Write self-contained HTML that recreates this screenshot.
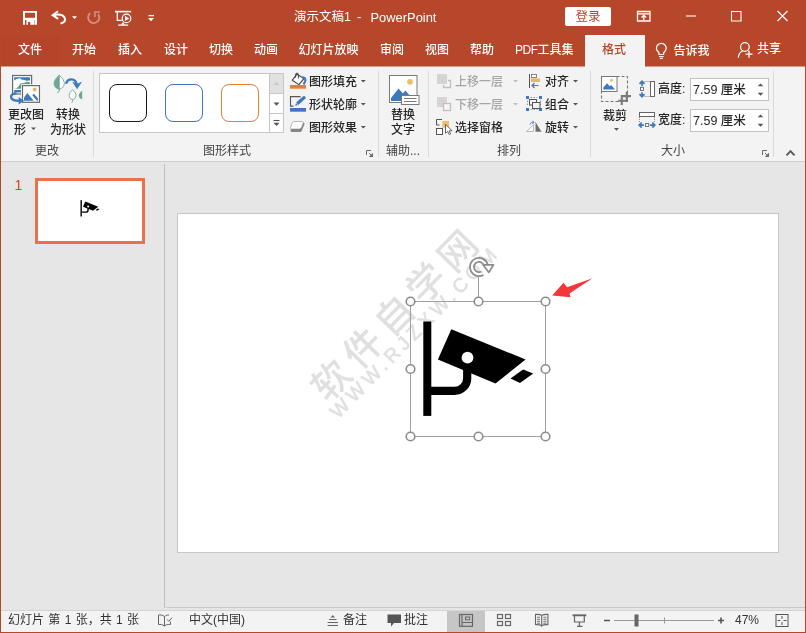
<!DOCTYPE html>
<html lang="zh-CN">
<head>
<meta charset="utf-8">
<title>演示文稿1 - PowerPoint</title>
<style>
*{box-sizing:border-box;margin:0;padding:0}
html,body{width:806px;height:633px;overflow:hidden;background:#e6e6e6}
body{position:relative;font-family:"Liberation Sans","Noto Sans CJK SC",sans-serif;font-size:12px;color:#262626;line-height:1}
#w{position:absolute;left:0;top:0;width:806px;height:633px;will-change:transform}
.a{position:absolute;white-space:nowrap}
#top{left:0;top:0;width:806px;height:66px;background:#b7472a}
#ribbon{left:1px;top:66px;width:804px;height:95px;background:#f3f3f3}
#ribline{left:1px;top:161px;width:804px;height:1px;background:#cfcfcf}
#lb{left:0;top:0;width:1px;height:633px;background:#b7472a}
#rb{left:805px;top:0;width:1px;height:633px;background:#b7472a}
#bb{left:0;top:632px;width:806px;height:1px;background:#b7472a}
.tab{top:43px;color:#fff;font-weight:500;font-size:12px;height:14px;line-height:14px}
#acttab{left:585px;top:35px;width:60px;height:32px;background:#f3f3f3}
.t{font-weight:500;font-size:12px;line-height:14px;height:14px}
.g{color:#a6a6a6}
.sep{width:1px;background:#dadada;top:71px;height:86px}
.gl{top:144px;font-size:12px;line-height:14px;color:#444}
#status{left:1px;top:610px;width:804px;height:22px;background:#f3f3f3;border-top:1px solid #d4d4d4}
.st{top:613px;font-size:12px;line-height:14px;color:#333;word-spacing:1px}
svg{position:absolute;overflow:visible}
</style>
</head>
<body>
<div id="w">
<div class="a" id="top"></div>
<div class="a" id="ribbon"></div>
<div class="a" style="left:1px;top:66px;width:804px;height:1px;background:#d59d8e"></div>
<div class="a" id="ribline"></div>

<!-- title -->
<div class="a" style="left:294px;top:10px;color:#fff;font-size:12.5px;line-height:15px">演示文稿<span style="letter-spacing:-0.5px">1</span></div>
<div class="a" style="left:357px;top:10px;color:#fff;font-size:12.5px;line-height:15px">-</div>
<div class="a" style="left:370.500px;top:10px;color:#fff;font-size:12.900px;line-height:15px">PowerPoint</div>
<div class="a" style="left:565px;top:7px;width:46px;height:19px;background:#fff;border-radius:2px;color:#b7472a;font-size:12.5px;line-height:20px;text-align:center">登录</div>


<!-- QAT icons -->
<svg class="a" style="left:0;top:0" width="806" height="34" viewBox="0 0 806 34">
 <g fill="none" stroke="#fff" stroke-width="1.4">
  <!-- save -->
  <path d="M23 11h14v13.800h-2v-12h-10v12h-2z" fill="#fff" stroke="none"/>
  <path d="M24 17.800h12v2.200h-12z" fill="#fff" stroke="none"/>
  <path d="M26.400 19.500h8.200v5.300h-4.300v-2.900h-2.300v2.900h-1.600z" fill="#fff" stroke="none"/>
  <!-- undo -->
  <path d="M53.500 15.200Q61.500 13.300 64.600 17.500Q66.500 22.300 60.500 23.600" stroke-width="2"/>
  <path d="M58 11.300l-5.300 3.900l5.500 3.700" stroke-width="2"/>
  <!-- redo faded -->
  <g opacity="0.4" stroke-width="1.800"><path d="M90.300 13a5.600 5.600 0 1 0 7.800 1"/><path d="M94.900 17v-5h5" stroke-width="1.600"/></g>
  <!-- slideshow -->
  <path d="M115 11.600h16.200" stroke-width="1.600"/>
  <path d="M117.300 12v8.400h4.500" stroke-width="1.300"/>
  <circle cx="126.500" cy="18.400" r="4.300" stroke-width="1.200"/>
  <path d="M125 15.800l4.200 2.600l-4.200 2.600z" fill="#fff" stroke="none"/>
  <path d="M118.200 25.200h10M121.500 25l1.500 -2l1.500 2" stroke-width="1.200"/>
  <!-- customize -->
  <path d="M148.500 15.600h5.500" stroke-width="1.300"/>
 </g>
 <path d="M148 18l3 3.200l3 -3.200z" fill="#fff"/>
 <path d="M72 16.300l2.500 2.700l2.500 -2.700z" fill="#fff"/>
 <!-- window controls -->
 <g fill="none" stroke="#fff" stroke-width="1.100">
  <path d="M637.500 11.500h12.500v9.500h-12.500z" stroke-width="1.300"/>
  <path d="M637.500 13.900h12.500" stroke-width="1.300"/>
  <path d="M643.800 20v-4M641.500 17.500l2.300 -2.300l2.300 2.300" stroke-width="1.300"/>
  <path d="M686 16h10"/>
  <path d="M731.500 11.500h9.500v9.500h-9.500z"/>
  <path d="M777.500 11l10 10M787.500 11l-10 10"/>
 </g>
</svg>
<!-- tabs -->
<div class="a" id="acttab"></div>
<div class="a" style="left:1px;top:35px;width:59px;height:31px;background:#b4452a"></div>
<div class="a tab" style="left:18px">文件</div>
<div class="a tab" style="left:72px">开始</div>
<div class="a tab" style="left:118px">插入</div>
<div class="a tab" style="left:164px">设计</div>
<div class="a tab" style="left:209px">切换</div>
<div class="a tab" style="left:254px">动画</div>
<div class="a tab" style="left:298.500px">幻灯片放映</div>
<div class="a tab" style="left:380px">审阅</div>
<div class="a tab" style="left:425px">视图</div>
<div class="a tab" style="left:470px">帮助</div>
<div class="a tab" style="left:515px"><span style="letter-spacing:-0.5px">PDF</span>工具集</div>
<div class="a tab" style="left:602px;color:#b7472a">格式</div>
<div class="a tab" style="left:673.500px;top:44px">告诉我</div>
<div class="a tab" style="left:757px;top:42px">共享</div>


<svg class="a" style="left:0;top:34px" width="806" height="32" viewBox="0 34 806 32">
 <g fill="none" stroke="#fff" stroke-width="1.200">
  <path d="M659 54.500v-1.200c0 -1.300 -2.600 -2.300 -2.600 -5.100a4.900 4.900 0 0 1 9.800 0c0 2.800 -2.600 3.800 -2.600 5.100v1.200z"/>
  <path d="M659 56.500h4.600M659.800 58.300h3"/>
  <circle cx="744.900" cy="47" r="4.300"/>
  <path d="M738.300 57.800c0.300 -4 2 -6 4.500 -6.800"/>
  <path d="M745.500 54.200h7M749 50.700v7" stroke-width="1.300"/>
 </g>
</svg>

<!-- ribbon group: 更改 -->
<div class="a t" style="left:8px;top:108px">更改图</div>
<div class="a t" style="left:14px;top:123px">形</div>
<div class="a t" style="left:56px;top:108px">转换</div>
<div class="a t" style="left:50px;top:123px">为形状</div>
<div class="a gl" style="left:35px">更改</div>
<div class="a sep" style="left:93px"></div>

<!-- gallery -->
<div class="a" style="left:99px;top:73px;width:185px;height:60px;background:#fff;border:1px solid #c6c6c6"></div>
<div class="a" style="left:269px;top:73px;width:15px;height:60px;border:1px solid #c6c6c6;background:#fff"></div>
<div class="a" style="left:270px;top:74px;width:13px;height:19px;background:#e1e1e1"></div>
<div class="a" style="left:270px;top:93px;width:13px;height:1px;background:#c6c6c6"></div>
<div class="a" style="left:270px;top:113px;width:13px;height:1px;background:#c6c6c6"></div>
<div class="a" style="left:109px;top:84px;width:38px;height:38px;border:1.500px solid #1a1a1a;border-radius:8px"></div>
<div class="a" style="left:165px;top:84px;width:38px;height:38px;border:1.500px solid #4472c4;border-radius:8px"></div>
<div class="a" style="left:221px;top:84px;width:38px;height:38px;border:1.500px solid #ed7d31;border-radius:8px"></div>
<div class="a t" style="left:309px;top:75px">图形填充</div>
<div class="a t" style="left:309px;top:98px">形状轮廓</div>
<div class="a t" style="left:309px;top:121px">图形效果</div>
<div class="a gl" style="left:203px">图形样式</div>
<div class="a sep" style="left:378px"></div>

<!-- 辅助 -->
<div class="a t" style="left:391px;top:108px">替换</div>
<div class="a t" style="left:391px;top:123px">文字</div>
<div class="a gl" style="left:386px">辅助...</div>
<div class="a sep" style="left:428px"></div>

<!-- 排列 -->
<div class="a t g" style="left:455px;top:75px">上移一层</div>
<div class="a t g" style="left:455px;top:98px">下移一层</div>
<div class="a t" style="left:455px;top:121px">选择窗格</div>
<div class="a t" style="left:545px;top:75px">对齐</div>
<div class="a t" style="left:545px;top:98px">组合</div>
<div class="a t" style="left:545px;top:121px">旋转</div>
<div class="a gl" style="left:497px">排列</div>
<div class="a sep" style="left:590px"></div>

<!-- 大小 -->
<div class="a t" style="left:603px;top:109px">裁剪</div>
<div class="a t" style="left:658px;top:82px">高度:</div>
<div class="a t" style="left:658px;top:113px">宽度:</div>
<div class="a" style="left:690px;top:78px;width:79px;height:23px;background:#fff;border:1px solid #c2c2c2"></div>
<div class="a" style="left:690px;top:109px;width:79px;height:23px;background:#fff;border:1px solid #c2c2c2"></div>
<div class="a t" style="left:693px;top:83px;font-size:12.5px">7.59 厘米</div>
<div class="a t" style="left:693px;top:114px;font-size:12.5px">7.59 厘米</div>
<div class="a gl" style="left:661px">大小</div>
<div class="a sep" style="left:773px"></div>

<!-- ribbon icons -->
<svg class="a" style="left:0;top:66px" width="806" height="94" viewBox="0 66 806 94">
 <!-- change graphic -->
 <g>
  <rect x="12.600" y="75.500" width="19" height="18.500" fill="#fff" stroke="#6a6a6a" stroke-width="1.200"/>
  <path d="M14.200 77.300h15.800v3.400c-1.500 -0.300 -2.500 0.300 -4 0c-1.500 -0.300 -2.500 -1 -4 -0.800c-1 -1.800 -3.200 -2.300 -4.500 -1c-1.500 0 -2.300 0.600 -3.300 1.800z" fill="#3e79bd"/>
  <path d="M14.200 88.800c3 -0.300 4.500 -2 5.500 -4.500c1.300 -1.500 3 -0.800 5 -1.500c1.500 -1.500 3.500 -1 5.300 -0.300v2h-8v4.300z" fill="#5d9f8a"/>
  <rect x="14.200" y="90" width="7" height="2.400" fill="#3e79bd"/>
  <rect x="21.200" y="84.300" width="19.400" height="19.100" fill="#fff"/>
  <rect x="22.500" y="85.600" width="17" height="16.700" fill="#fff" stroke="#6a6a6a" stroke-width="1.200"/>
  <circle cx="34.700" cy="89.500" r="1.900" fill="#f0b45c"/>
  <path d="M24 100.800v-3.300l3.400 -4.500l6.300 7.800z" fill="#3e79bd"/>
  <path d="M32.300 95.300l1.500 -1.500l4.100 4.500v2.500h-1z" fill="#3e79bd"/>
  <path d="M16.500 93.300c-4 0 -6 2 -5.300 4.300c0.700 2.200 3.500 3.200 7.500 3.200h1" fill="none" stroke="#3e79bd" stroke-width="2.400"/>
  <path d="M18.600 97l5.500 3.800l-5.500 3.800z" fill="#3e79bd"/>
 </g>
 <!-- convert to shape -->
 <g>
  <path d="M59.250 75.300c-3.500 3 -5.200 5.500 -5.200 8.200c0 3 2 5 5.200 5.800z" fill="#6da793" stroke="#6da793" stroke-width="0.800"/>
  <path d="M59.250 75.300c3.500 3 5 5.500 5 8.200c0 3 -2 5 -5 5.800z" fill="#fff" stroke="#6da793" stroke-width="0.900"/>
  <path d="M59.250 88.500v1.500c0 1.500 -0.600 2.300 -2 2.500" fill="none" stroke="#6da793" stroke-width="1"/>
  <path d="M66 83.800c1.500 -5.500 9.500 -6.800 11 1.500" fill="none" stroke="#3e79bd" stroke-width="2.400"/>
  <path d="M72.800 82.200l4.300 2l4.300 -2l-4.300 6.500z" fill="#3e79bd" stroke="#3e79bd" stroke-width="0.600" stroke-linejoin="round"/>
  <path d="M72.600 89.800c-2.300 2 -3.400 3.800 -3.400 5.600c0 2.200 1.300 3.600 3.400 4.200c2.100 -0.600 3.400 -2 3.400 -4.200c0 -1.800 -1.100 -3.600 -3.400 -5.600z" fill="#fff" stroke="#6da793" stroke-width="0.900"/>
  <path d="M72.600 99.500v1.300c0 1 -0.300 1.500 -1 1.700" fill="none" stroke="#6da793" stroke-width="0.900"/>
  <path d="M82.200 90.800c-2.300 1.800 -3.400 3.300 -3.400 4.800c0 1.800 1.200 3.200 3.400 4z" fill="#6da793"/>
 </g>
</svg>

<!-- ribbon icons 2 -->
<svg class="a" style="left:0;top:66px" width="806" height="94" viewBox="0 66 806 94">
 <!-- gallery arrows -->
 <path d="M273.500 85l3 -3.200l3 3.200z" fill="#c8c8c8"/>
 <path d="M273.500 102.500l3 3.200l3 -3.200z" fill="#555"/>
 <path d="M273.500 120.500h6" stroke="#555" stroke-width="1.100" fill="none"/>
 <path d="M273.500 122.800l3 3.200l3 -3.200z" fill="#555"/>
 <!-- fill -->
 <rect x="290" y="85" width="16" height="3.700" fill="#ed7d31"/>
 <path d="M297 74.200l6.900 4.400l-5 6l-6.600 -4.400z" fill="#fff" stroke="#444" stroke-width="1.100" stroke-linejoin="round"/>
 <path d="M295.600 77.600v-3.400c0 -1.400 2.800 -1.400 2.800 0v4.300" fill="none" stroke="#444" stroke-width="1"/>
 <path d="M302.800 77.300c2.800 0.300 3.600 3 1.300 6.200" fill="none" stroke="#3e79bd" stroke-width="2.200" stroke-linecap="round"/>
 <!-- outline -->
 <rect x="290" y="108" width="16" height="3.700" fill="#4472c4"/>
 <path d="M300.600 96.600h-10.100v9.500h3" fill="none" stroke="#555" stroke-width="1.100"/>
 <path d="M295.200 106l0.800 -2.800l1.900 1.900z" fill="#3e79bd"/>
 <path d="M297.200 103.800l5 -4.500" fill="none" stroke="#3e79bd" stroke-width="3.300"/>
 <path d="M303 98.600l1 -0.900" fill="none" stroke="#3e79bd" stroke-width="3.300" stroke-linecap="round"/>
 <!-- effects -->
 <path d="M294.800 122.600h8c1.400 0 2 0.800 1.500 2l-2.400 5.800c-0.400 1 -1.200 1.600 -2.300 1.600h-7.600c-1.300 0 -1.800 -0.900 -1.400 -1.900l2.300 -5.900c0.400 -1 1 -1.600 1.900 -1.600z" fill="#858585"/>
 <path d="M294 121.500h7.800c1.200 0 1.800 0.700 1.400 1.700l-1.800 4.400c-0.400 0.900 -1.100 1.400 -2.100 1.400h-7.700c-1.100 0 -1.600 -0.700 -1.200 -1.600l1.900 -4.500c0.400 -0.900 1 -1.400 1.700 -1.400z" fill="#fff" stroke="#8a8a8a" stroke-width="0.600"/>
 <!-- dropdown arrows -->
 <g fill="#555">
  <path d="M360.800 80l2.500 2.600l2.500 -2.600z"/>
  <path d="M360.800 103l2.500 2.600l2.500 -2.600z"/>
  <path d="M360.800 126l2.500 2.600l2.500 -2.600z"/>
  <path d="M573 80l2.500 2.600l2.500 -2.600z"/>
  <path d="M573 103l2.500 2.600l2.500 -2.600z"/>
  <path d="M573 126l2.500 2.600l2.500 -2.600z"/>
  <path d="M31 127.500l2.500 2.600l2.500 -2.600z"/>
  <path d="M614 128l2.500 2.700l2.500 -2.700z"/>
 </g>
 <g fill="#bdbdbd">
  <path d="M513 80l2.500 2.600l2.500 -2.600z"/>
  <path d="M513 103l2.500 2.600l2.500 -2.600z"/>
 </g>
 <!-- launchers -->
 <g fill="none" stroke="#6a6a6a" stroke-width="1">
  <path d="M366.500 155v-4.500h4.500"/><path d="M369 153l3 3"/><path d="M373 152.800v4.200h-4.200z" fill="#6a6a6a" stroke="none"/>
  <path d="M762.500 155v-4.500h4.500"/><path d="M765 153l3 3"/><path d="M769 152.800v4.200h-4.200z" fill="#6a6a6a" stroke="none"/>
 </g>
 <!-- collapse ribbon -->
 <path d="M786.500 155.300l4 -4.200l4 4.200" fill="none" stroke="#5a5a5a" stroke-width="1.900"/>
</svg>

<!-- ribbon icons 3 -->
<svg class="a" style="left:0;top:66px" width="806" height="94" viewBox="0 66 806 94">
 <!-- alt text -->
 <rect x="389.500" y="75.500" width="27.500" height="27" fill="#fff" stroke="#7a7a7a" stroke-width="1"/>
 <circle cx="410" cy="81.800" r="2.900" fill="#f0c060"/>
 <path d="M391 101v-3l7.500 -9.500l4.500 5l2.500 -3l5.500 6.500v4z" fill="#3e79bd"/>
 <rect x="401.500" y="95.500" width="17.500" height="9" fill="#fff" stroke="#7a7a7a" stroke-width="1"/>
 <path d="M404 98.500h12.500M404 101.500h12.500" stroke="#7a7a7a" stroke-width="1" fill="none"/>
 <!-- bring forward (disabled) -->
 <rect x="437" y="74" width="10" height="10" fill="#d6d3d6"/>
 <path d="M448 80.500h2.500v7h-7v-2.500" fill="none" stroke="#c2bec2" stroke-width="1.300"/>
 <!-- send backward (disabled) -->
 <rect x="437" y="97" width="10" height="10" fill="#d6d3d6"/>
 <rect x="443.500" y="103.500" width="7" height="7" fill="#f6f2f6" stroke="#c2bec2" stroke-width="1.300"/>
 <!-- selection pane -->
 <path d="M442 119.500h-5.500v5.500h3" fill="none" stroke="#555" stroke-width="1"/>
 <rect x="436.500" y="128.500" width="6" height="6" fill="#fff" stroke="#555" stroke-width="1"/>
 <rect x="442.300" y="121" width="6.700" height="6.800" fill="#f0bd6e"/>
 <path d="M445.500 124.300v9l2.200 -2l1.500 3.300l1.400 -0.600l-1.500 -3.200h3z" fill="#fff" stroke="#555" stroke-width="0.900" stroke-linejoin="round"/>
 <!-- align -->
 <path d="M529.500 74v14" stroke="#555" stroke-width="1" fill="none"/>
 <rect x="531.500" y="74.500" width="5" height="3" fill="#fff" stroke="#777" stroke-width="0.900"/>
 <rect x="531" y="78.500" width="9" height="3.500" fill="#f0b45c"/>
 <path d="M532 85.500h6.500M534.500 83l-2.500 2.500l2.500 2.500" fill="none" stroke="#3e79bd" stroke-width="1.200"/>
 <!-- group -->
 <g fill="#3e79bd"><rect x="526" y="96" width="3" height="3"/><rect x="539" y="96" width="3" height="3"/><rect x="526" y="108" width="3" height="3"/><rect x="539" y="108" width="3" height="3"/></g>
 <path d="M530.500 97.500h7M530.500 109.500h7M527.500 100.500v6M540.500 100.500v6" stroke="#9a9a9a" stroke-width="1" stroke-dasharray="1.500 1.500" fill="none"/>
 <rect x="529.500" y="99.500" width="7" height="5.500" fill="none" stroke="#555" stroke-width="1"/>
 <rect x="532.500" y="102.500" width="7.500" height="6" fill="#f3f3f3" stroke="#555" stroke-width="1"/>
 <!-- rotate -->
 <path d="M535.500 122v9.800h6z" fill="#6e6e6e"/>
 <path d="M533.500 124.500v7h-7z" fill="#fff" stroke="#aaa" stroke-width="0.800"/>
 <path d="M530 124.500c0.500 -2 2 -2.300 3.500 -2.200M532.500 120.800l1.500 1.500l-1.500 1.500" fill="none" stroke="#3e79bd" stroke-width="1"/>
 <!-- crop -->
 <path d="M601.500 76.500h26v25h-26z" fill="none" stroke="#777" stroke-width="1.100" stroke-dasharray="3 2"/>
 <rect x="601.500" y="76.500" width="15.500" height="15" fill="#fff" stroke="#7a7a7a" stroke-width="1"/>
 <circle cx="611.500" cy="80.300" r="1.500" fill="#f0c060"/>
 <path d="M603.300 89.500v-2l3.700 -4.300l2.800 3l1.200 -1.300l3.700 4.200v0.400z" fill="#3e79bd"/>
 <path d="M621.800 95v10M626.800 91.700v9.800M621 96.100h10M618.200 100.800h9.700" fill="none" stroke="#7a7a7a" stroke-width="2.100"/>
 <!-- height icon -->
 <rect x="650.500" y="81.500" width="4" height="15" fill="#fff" stroke="#666" stroke-width="1"/>
 <path d="M644.500 81.500h5.500M644.500 96.500h5.500" stroke="#888" stroke-width="1" stroke-dasharray="1 1" fill="none"/>
 <rect x="640.500" y="87.300" width="3" height="3.200" fill="#fff" stroke="#666" stroke-width="0.900"/>
 <path d="M642 86v-4M639.500 83.800l2.500 -2.500l2.500 2.500M642 92.200v4M639.500 94.200l2.500 2.500l2.500 -2.500" fill="none" stroke="#3e79bd" stroke-width="1.700"/>
 <!-- width icon -->
 <rect x="639.500" y="112.500" width="15" height="4" fill="#fff" stroke="#666" stroke-width="1"/>
 <path d="M639.500 117v5M654.500 117v5" stroke="#888" stroke-width="1" stroke-dasharray="1 1" fill="none"/>
 <rect x="645.500" y="123.500" width="3.200" height="3" fill="#fff" stroke="#666" stroke-width="0.900"/>
 <path d="M644 125.100h-4M641.700 122.600l-2.500 2.500l2.500 2.500M650 125.100h4.500M652.300 122.600l2.500 2.500l-2.500 2.500" fill="none" stroke="#3e79bd" stroke-width="1.700"/>
 <!-- spinners -->
 <g fill="#555">
  <path d="M757.700 86.300l2.800 -2.900l2.800 2.900zM757.700 92.800l2.800 2.900l2.800 -2.900z"/>
  <path d="M757.700 117.300l2.800 -2.900l2.800 2.900zM757.700 123.800l2.800 2.900l2.800 -2.900z"/>
 </g>
</svg>
<!-- workspace -->
<div class="a" style="left:164px;top:164px;width:1px;height:444px;background:#bebebe"></div>
<div class="a" style="left:14.500px;top:178px;color:#d04a25;font-size:14px;line-height:14px">1</div>
<div class="a" style="left:35px;top:178px;width:110px;height:66px;background:#fff;border:3px solid #eb7050"></div>
<div class="a" style="left:177px;top:213px;width:602px;height:340px;background:#fff;border:1px solid #c6c6c6"></div>


<!-- slide content -->
<div class="a" style="left:394.800px;top:316px;width:0;height:0">
 <div class="a" style="left:-150px;top:-25px;width:300px;text-align:center;transform:rotate(-45.700deg);transform-origin:50% 50%;color:#e0e0e0;font-weight:500;font-size:38px;line-height:50px;letter-spacing:7.250px;text-indent:7.250px">软件自学网</div>
</div>
<div class="a" style="left:412.500px;top:333px;width:0;height:0">
 <div class="a" style="left:-150px;top:-12px;width:300px;text-align:center;transform:rotate(-45.600deg);transform-origin:50% 50%;color:#e0e0e0;-webkit-text-stroke:0.6px #e0e0e0;font-size:19.500px;line-height:24px;letter-spacing:4.300px;text-indent:4.300px">WWW.RJZXW.COM</div>
</div>
<svg class="a" style="left:0;top:161px" width="806" height="447" viewBox="0 161 806 447">
 <!-- camera -->
 <g id="cam">
  <rect x="423.300" y="321.500" width="8" height="94.400"/>
  <path d="M431 390.900h23.500a12.700 12.700 0 0 0 12.700 -12.700v-14" fill="none" stroke="#000" stroke-width="8.200"/>
  <path d="M451.300 329.200l74.300 30.300l-30.100 24l-57.600 -24z"/>
  <circle cx="467.500" cy="357.700" r="5.900" fill="#fff"/>
  <path d="M523.100 369.600l10.100 3.800l-13.200 9.600l-9.500 -4.500z"/>
 </g>
 <!-- selection -->
 <g fill="none" stroke="#a0a0a0" stroke-width="1">
  <rect x="410.500" y="301.500" width="135" height="135"/>
  <path d="M478.500 301v-27"/>
 </g>
 <g fill="#fff" stroke="#8c8c8c" stroke-width="1.600">
  <circle cx="410.500" cy="301.500" r="4.300"/><circle cx="478.500" cy="301.500" r="4.300"/><circle cx="545.500" cy="301.500" r="4.300"/>
  <circle cx="410.500" cy="369" r="4.300"/><circle cx="545.500" cy="369" r="4.300"/>
  <circle cx="410.500" cy="436.500" r="4.300"/><circle cx="478.500" cy="436.500" r="4.300"/><circle cx="545.500" cy="436.500" r="4.300"/>
 </g>
 <!-- rotate handle -->
 <g fill="none" stroke="#8c8c8c">
  <path d="M485.800 265a7.100 7.100 0 1 0 -3.300 8.200" stroke-width="5.800"/>
  <path d="M485.800 265a7.100 7.100 0 1 0 -3.300 8.200" stroke="#fff" stroke-width="2.300"/>
 </g>
 <path d="M483 264.800h10.500l-4.600 7.600z" fill="#fff" stroke="#8c8c8c" stroke-width="1.700" stroke-linejoin="round"/>
 <!-- red arrow -->
 <path d="M552.200 295.600L563.500 282.700L567 287.200L592.500 278.300L569.500 293.500L570.500 297.200Z" fill="#f4373a"/>
 <!-- thumbnail camera -->
 <g transform="translate(7.100 144.400) scale(0.17333)">
  <rect x="423.300" y="321.500" width="8" height="94.400"/>
  <path d="M431 390.900h23.500a12.700 12.700 0 0 0 12.700 -12.700v-14" fill="none" stroke="#000" stroke-width="8.200"/>
  <path d="M451.300 329.200l74.300 30.300l-30.100 24l-57.600 -24z"/>
  <circle cx="467.500" cy="357.700" r="5.900" fill="#fff"/>
  <path d="M523.100 369.600l10.100 3.800l-13.200 9.600l-9.500 -4.500z"/>
 </g>
</svg>
<div class="a" style="left:166px;top:607px;width:639px;height:1px;background:#c8c8c8"></div>
<!-- status bar -->
<div class="a" id="status"></div>
<div class="a st" style="left:8px">幻灯片 第 1 张，共 1 张</div>
<div class="a st" style="left:189px">中文(中国)</div>
<div class="a st" style="left:343px">备注</div>
<div class="a st" style="left:404px">批注</div>
<div class="a st" style="left:735px">47%</div>


<svg class="a" style="left:0;top:610px" width="806" height="22" viewBox="0 610 806 22">
 <rect x="447" y="611" width="38" height="21" fill="#c6c6c6"/>
 <!-- spell -->
 <g fill="none" stroke="#666" stroke-width="1">
  <path d="M164.500 616.500c-2 -1.500 -4 -1.800 -6 -1.500v9.500c2 -0.300 4 0 6 1.500zM164.500 616.500c1.500 -1.300 3 -1.600 4.500 -1.500M164.500 626c1.500 -1.300 3.500 -1.800 6 -1.500v-3"/>
  <path d="M167 619.500l1.800 1.800l3.200 -3.600"/>
  <!-- notes -->
  <path d="M327.500 625.500h10.500M327.500 622.500h10.500M329 619.500h7.500"/>
  <path d="M330.500 617.500l2.300 -2.600l2.300 2.600z" fill="#666" stroke="none"/>
  <!-- normal view -->
  <rect x="459.500" y="614.500" width="13" height="11.800" stroke-width="1.200"/>
  <path d="M462 614.500v11.800M462 622.500h10.500" stroke-width="1.200"/>
  <rect x="465.500" y="617" width="4.200" height="2.800" stroke-width="1"/>
  <!-- sorter -->
  <rect x="497.500" y="614.500" width="5" height="4" stroke-width="1.200"/><rect x="505.500" y="614.500" width="5" height="4" stroke-width="1.200"/>
  <rect x="497.500" y="621.500" width="5" height="4" stroke-width="1.200"/><rect x="505.500" y="621.500" width="5" height="4" stroke-width="1.200"/>
  <!-- reading -->
  <path d="M541.700 615.300c-1.800 -0.900 -4 -1.100 -6.200 -0.900v10.300c2.200 -0.200 4.400 0 6.200 0.900c1.800 -0.900 4 -1.100 6.200 -0.900v-10.300c-2.200 -0.200 -4.400 0 -6.200 0.900zM541.700 615.300v11.500" stroke-width="1.100"/>
  <path d="M537 617.300h3M537 619.300h3M537 621.300h3M537 623.200h3M543.400 617.300h3M543.400 619.300h3M543.400 621.300h3M543.400 623.200h3" stroke-width="0.900"/>
  <!-- slideshow -->
  <path d="M572.500 615.300h13.800" stroke-width="1.900"/>
  <path d="M574.500 616v6h9.800v-6M579.400 622v4M577 626.300h5.500" stroke-width="1.200"/>
  <!-- fit -->
  <rect x="776" y="614.500" width="12" height="12" stroke="#555"/>
  <path d="M782 616v3M782 625v-3M777.500 620.500h3M786.500 620.500h-3" stroke="#555"/>
 </g>
 <!-- comments -->
 <path d="M387.500 614.500h13.500v8.500h-7l-3 3.500v-3.500h-3.500z" fill="#555"/>
 <!-- zoom slider -->
 <path d="M604 620.500h6M718 620.500h6M721 617.500v6" stroke="#555" stroke-width="1.600" fill="none"/>
 <path d="M614 620.500h100M664.500 617.500v6" stroke="#999" stroke-width="1" fill="none"/>
 <rect x="634.500" y="614.500" width="4" height="12" fill="#666"/>
</svg>
<div class="a" id="lb"></div>
<div class="a" id="rb"></div>
<div class="a" id="bb"></div>
</div>
</body>
</html>
